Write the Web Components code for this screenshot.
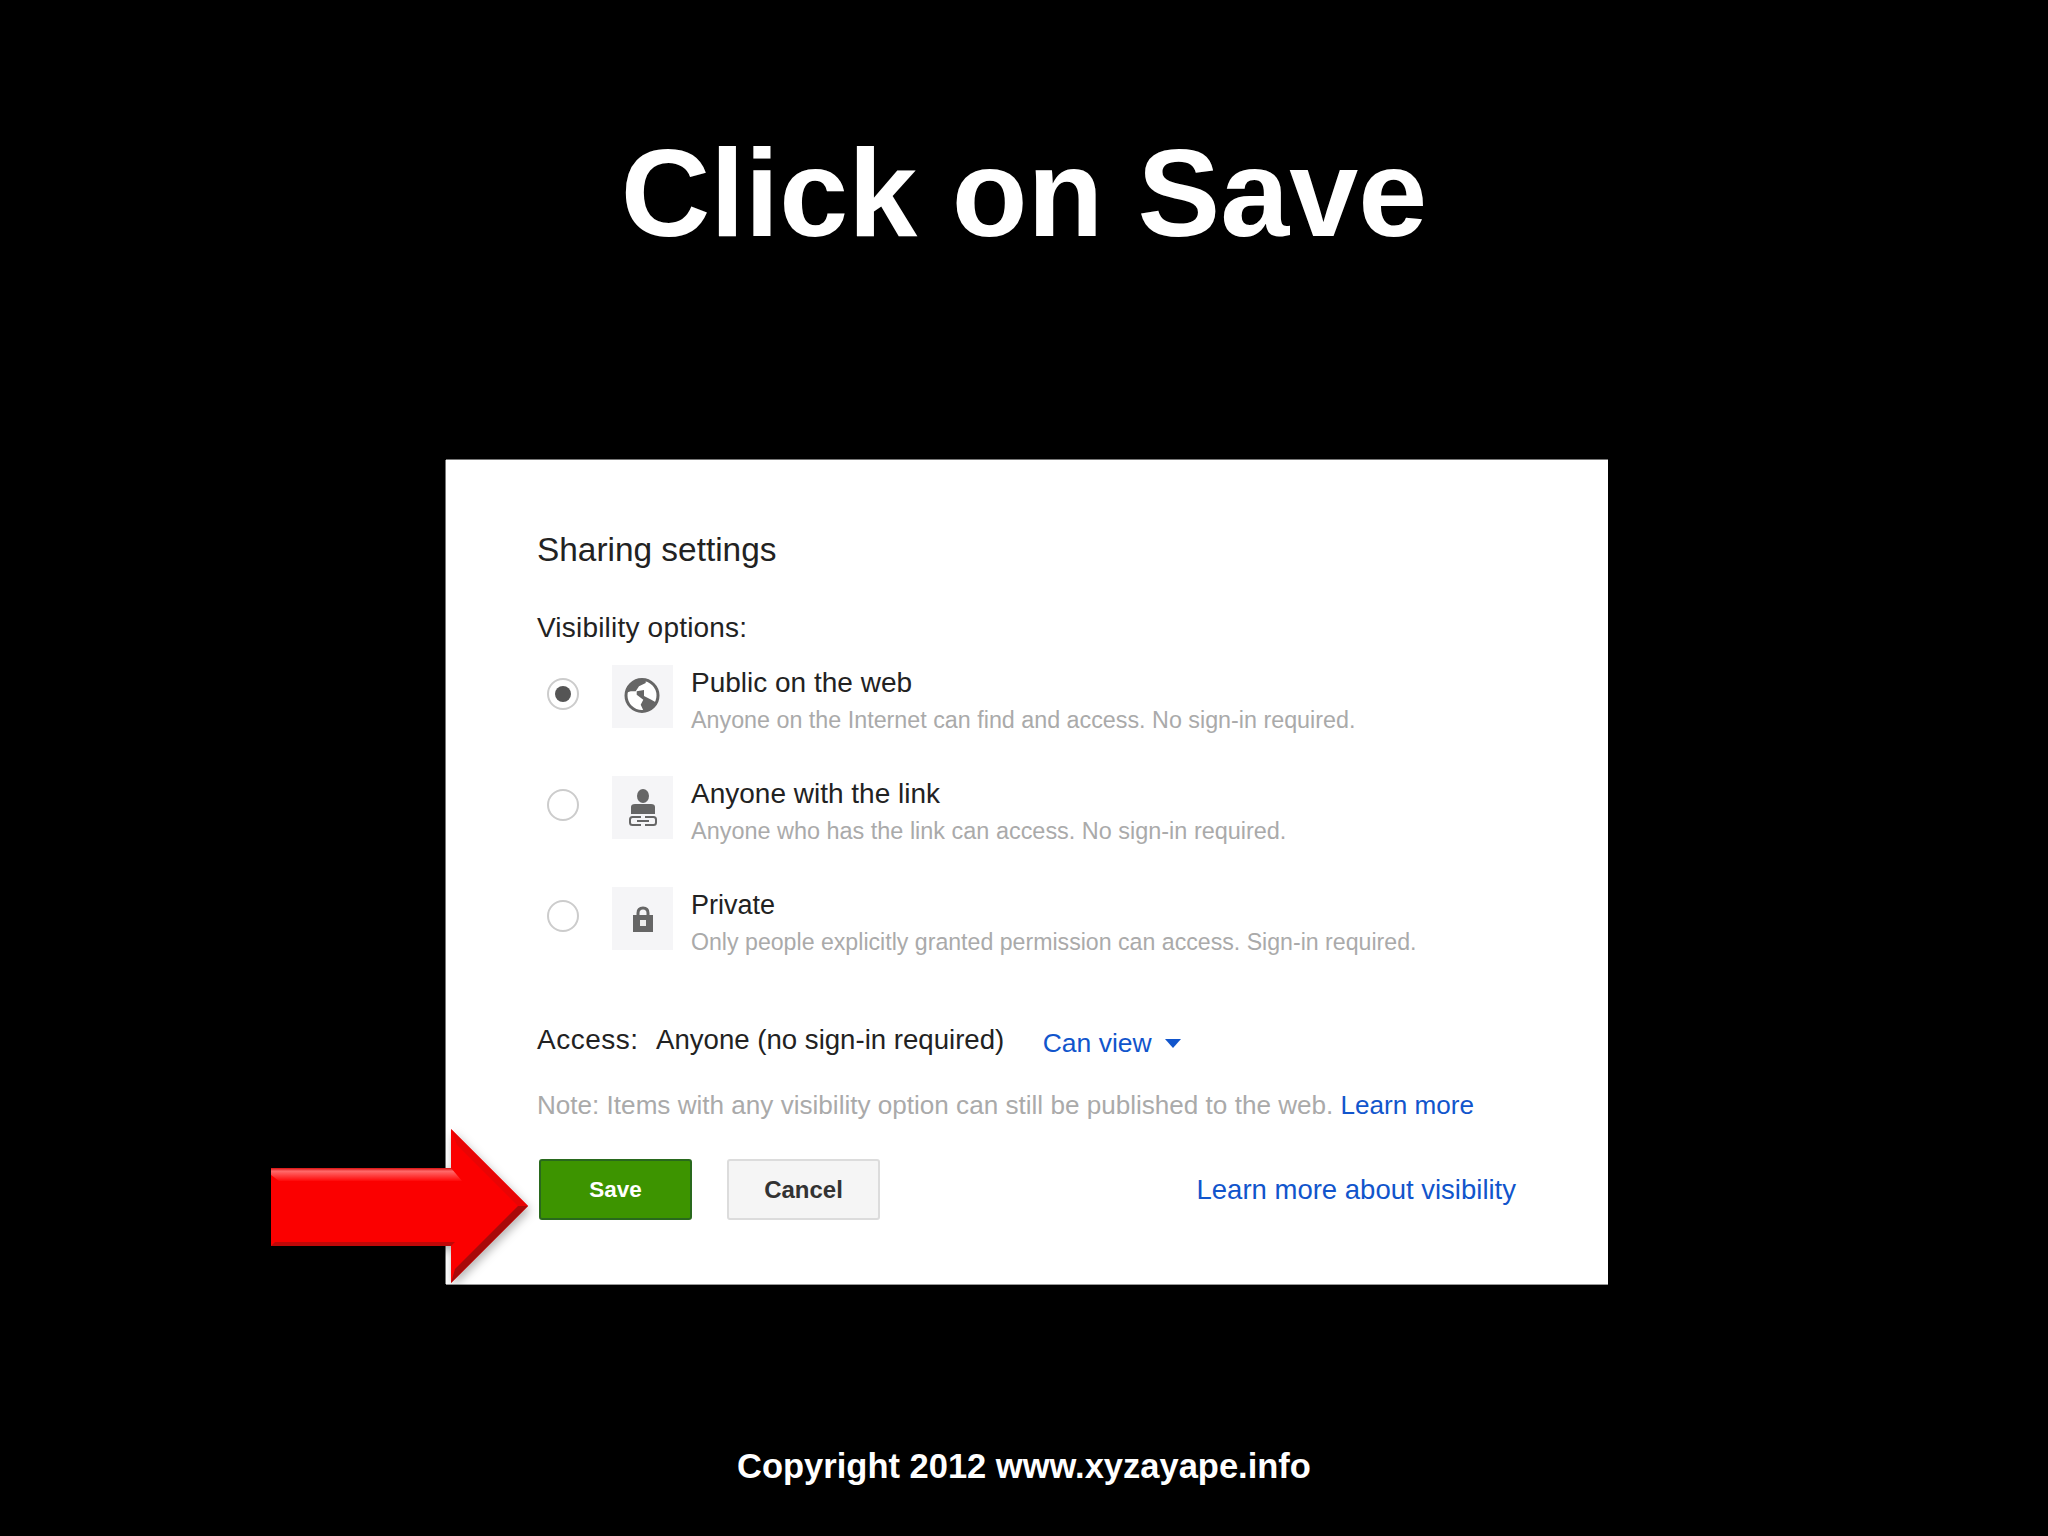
<!DOCTYPE html>
<html lang="en">
<head>
<meta charset="utf-8">
<title>Click on Save</title>
<style>
	html, body { margin: 0; background: #000; }
</style>
</head>
<body>
<slide-page>
	<slide-title slot="title">Click on Save</slide-title>
	<share-dialog slot="dialog">
		<visibility-option icon="globe" checked hint-size="23.3" label="Public on the web" hint="Anyone on the Internet can find and access. No sign-in required."></visibility-option>
		<visibility-option icon="link" hint-size="23.45" label="Anyone with the link" hint="Anyone who has the link can access. No sign-in required."></visibility-option>
		<visibility-option icon="lock" hint-size="23.15" label-size="27" label="Private" hint="Only people explicitly granted permission can access. Sign-in required."></visibility-option>
	</share-dialog>
	<red-arrow slot="arrow"></red-arrow>
	<slide-footer slot="footer">Copyright 2012 www.xyzayape.info</slide-footer>
</slide-page>

<script>
const FONT = '"Liberation Sans", Arial, sans-serif';

const ICONS = {
	globe: `<svg width="38" height="38" viewBox="0 0 38 38" style="margin: -4px 2px 0 0">
		<circle cx="19" cy="19.5" r="16" fill="#fff" stroke="#666" stroke-width="3"/>
		<path fill="#666" d="M3.3 13 C6 7 13 3 22.7 3 L22.7 7 L16 10.3 L12.7 15.3 L7.7 15.3 L2.7 17 Z"/>
		<path fill="#666" d="M13.7 15.3 L21 14 L21 20 L28.3 23.7 L34 27 C31 32 27 35 21 35.7 L17.7 28.7 L20.3 23.7 L13.7 18.7 Z"/>
	</svg>`,
	link: `<svg width="30" height="38" viewBox="0 0 30 38">
		<ellipse cx="15" cy="7" rx="6" ry="7" fill="#666"/>
		<path fill="#666" d="M3 25 V18 Q3 15 7 15 H23 Q27 15 27 18 V25 Z"/>
		<rect x="2" y="28" width="26" height="8" rx="2.5" fill="none" stroke="#666" stroke-width="2"/>
		<path fill="#f5f5f7" d="M13 26 h4 v12 h-4 z"/>
		<path stroke="#666" stroke-width="2" d="M9 32 H21"/>
	</svg>`,
	lock: `<svg width="20" height="26" viewBox="0 0 20 26">
		<path fill="none" stroke="#666" stroke-width="3" d="M5 11 V7 Q5 2 10 2 Q15 2 15 7 V11"/>
		<rect x="0" y="9" width="20" height="17" fill="#666"/>
		<rect x="7" y="14" width="6" height="6" fill="#eee"/>
	</svg>`
};

class SlidePage extends HTMLElement {
	constructor() {
		super();
		this.attachShadow({ mode: 'open' });
		this.shadowRoot.innerHTML = `
			<style>
				:host {
					display: flex;
					flex-direction: column;
					align-items: flex-start;
					position: relative;
					width: 2048px;
					height: 1536px;
					background: #000;
					overflow: hidden;
					font-family: ${FONT};
				}
			</style>
			<slot name="title"></slot>
			<slot name="dialog"></slot>
			<slot name="arrow"></slot>
			<slot name="footer"></slot>
		`;
	}
}

class SlideTitle extends HTMLElement {
	constructor() {
		super();
		this.attachShadow({ mode: 'open' });
		this.shadowRoot.innerHTML = `
			<style>
				:host {
					display: block;
					width: 2048px;
					height: 460px;
					box-sizing: border-box;
					padding-top: 123px;
					text-align: center;
					color: #fff;
					font-size: 124px;
					line-height: 140px;
					font-weight: bold;
				}
			</style>
			<slot></slot>
		`;
	}
}

class SlideFooter extends HTMLElement {
	constructor() {
		super();
		this.attachShadow({ mode: 'open' });
		this.shadowRoot.innerHTML = `
			<style>
				:host {
					display: block;
					width: 2048px;
					margin-top: 160px;
					text-align: center;
					color: #fff;
					font-size: 34.5px;
					line-height: 44px;
					font-weight: bold;
				}
			</style>
			<slot></slot>
		`;
	}
}

class ShareDialog extends HTMLElement {
	constructor() {
		super();
		this.attachShadow({ mode: 'open' });
		this.shadowRoot.innerHTML = `
			<style>
				:host {
					display: block;
					box-sizing: border-box;
					width: 1162px;
					height: 824px;
					margin-left: 446px;
					padding: 70px 92px 0 91px;
					background: #fff;
					color: #222;
					font-size: 28px;
					box-shadow: -1px 0 0 #777, 0 -1px 0 #777, 0 1px 0 #999;
				}
				h2 {
					margin: 0;
					font-size: 33.4px;
					line-height: 40px;
					font-weight: normal;
				}
				.label {
					margin-top: 40px;
					line-height: 36px;
					letter-spacing: 0.2px;
				}
				.options {
					display: flex;
					flex-direction: column;
					gap: 38px;
					margin-top: 19px;
				}
				.access {
					display: flex;
					margin-top: 62px;
					line-height: 36px;
				}
				.access .what { letter-spacing: 0.5px; }
				.access .who { margin-left: 17.5px; font-size: 27.6px; }
				.access .role {
					display: flex;
					align-items: center;
					gap: 13px;
					margin-left: 38.5px;
					position: relative;
					top: 3px;
					font-size: 26.5px;
					color: #1155cc;
				}
				.caret {
					width: 0;
					height: 0;
					border: 8px solid transparent;
					border-top: 9px solid #1155cc;
					border-bottom: 0;
				}
				.note {
					margin-top: 29px;
					font-size: 26.1px;
					line-height: 36px;
					white-space: nowrap;
					color: #aaa;
				}
				a { color: #1155cc; text-decoration: none; }
				.actions {
					display: flex;
					align-items: center;
					margin-top: 36px;
					padding-left: 2px;
					gap: 35px;
				}
				.actions a { margin-left: auto; font-size: 27.5px; }
				button {
					box-sizing: border-box;
					width: 153px;
					height: 61px;
					border-radius: 3px;
					font: bold 24px ${FONT};
					padding: 0;
				}
				.save {
					background: #3d9400;
					border: 2px solid #29691d;
					color: #fff;
					font-size: 22.5px;
				}
				.cancel {
					background: #f5f5f5;
					border: 2px solid #dcdcdc;
					color: #333;
				}
			</style>
			<h2>Sharing settings</h2>
			<div class="label">Visibility options:</div>
			<div class="options"><slot></slot></div>
			<div class="access">
				<span class="what">Access:</span>
				<span class="who">Anyone (no sign-in required)</span>
				<span class="role">Can view <i class="caret"></i></span>
			</div>
			<div class="note">Note: Items with any visibility option can still be published to the web. <a href="#">Learn more</a></div>
			<div class="actions">
				<button class="save">Save</button>
				<button class="cancel">Cancel</button>
				<a href="#">Learn more about visibility</a>
			</div>
		`;
	}
}

class VisibilityOption extends HTMLElement {
	constructor() {
		super();
		this.attachShadow({ mode: 'open' });
	}
	connectedCallback() {
		const checked = this.hasAttribute('checked');
		const labelSize = this.getAttribute('label-size') || 28;
		this.shadowRoot.innerHTML = `
			<style>
				:host {
					display: flex;
					align-items: flex-start;
					height: 73px;
				}
				.radio {
					box-sizing: border-box;
					display: flex;
					align-items: center;
					justify-content: center;
					width: 32px;
					height: 32px;
					margin: 13px 33px 0 10px;
					border: 2px solid #ccc;
					border-radius: 50%;
				}
				.radio i {
					width: 16px;
					height: 16px;
					border-radius: 50%;
					background: #555;
				}
				.tile {
					display: flex;
					align-items: center;
					justify-content: center;
					flex: none;
					width: 61px;
					height: 63px;
					margin-right: 18px;
					background: #f5f5f7;
				}
				.title {
					font-size: ${labelSize}px;
					line-height: 36px;
					color: #222;
				}
				.hint {
					margin-top: 1px;
					font-size: ${this.getAttribute('hint-size')}px;
					line-height: 36px;
					color: #aaa;
				}
			</style>
			<div class="radio">${checked ? '<i></i>' : ''}</div>
			<div class="tile">${ICONS[this.getAttribute('icon')]}</div>
			<div>
				<div class="title">${this.getAttribute('label')}</div>
				<div class="hint">${this.getAttribute('hint')}</div>
			</div>
		`;
	}
}

class RedArrow extends HTMLElement {
	constructor() {
		super();
		this.attachShadow({ mode: 'open' });
		this.shadowRoot.innerHTML = `
			<style>
				:host {
					display: block;
					position: absolute;
					left: 271px;
					top: 1129px;
					width: 270px;
					height: 165px;
				}
				svg { display: block; overflow: visible; }
			</style>
			<svg width="270" height="165" viewBox="0 0 270 165">
				<defs>
					<filter id="shade" x="-10%" y="-10%" width="130%" height="130%">
						<feDropShadow dx="2" dy="4" stdDeviation="5" flood-color="#000" flood-opacity="0.3"/>
					</filter>
					<linearGradient id="top" x1="0" y1="0" x2="0" y2="1">
						<stop offset="0" stop-color="#d81010"/>
						<stop offset="0.25" stop-color="#ff6a6a"/>
						<stop offset="1" stop-color="#ff0808"/>
					</linearGradient>
				</defs>
				<!-- tip at 257,77 -->
				<polygon filter="url(#shade)" fill="#fb0606" points="0,39 180,39 180,0 257,77 180,154 180,117 0,117"/>
				<polygon fill="url(#top)" points="0,39 180,39 191,52 8,52 0,46"/>
				<polygon fill="#c00808" points="0,117 180,117 184,113 4,113"/>
				<polygon fill="#e80404" points="180,0 257,77 247,77 186,16"/>
				<polygon fill="#a80a0a" points="180,154 257,77 247,77 184,140"/>
			</svg>
		`;
	}
}

customElements.define('slide-page', SlidePage);
customElements.define('slide-title', SlideTitle);
customElements.define('slide-footer', SlideFooter);
customElements.define('share-dialog', ShareDialog);
customElements.define('visibility-option', VisibilityOption);
customElements.define('red-arrow', RedArrow);
</script>
</body>
</html>
